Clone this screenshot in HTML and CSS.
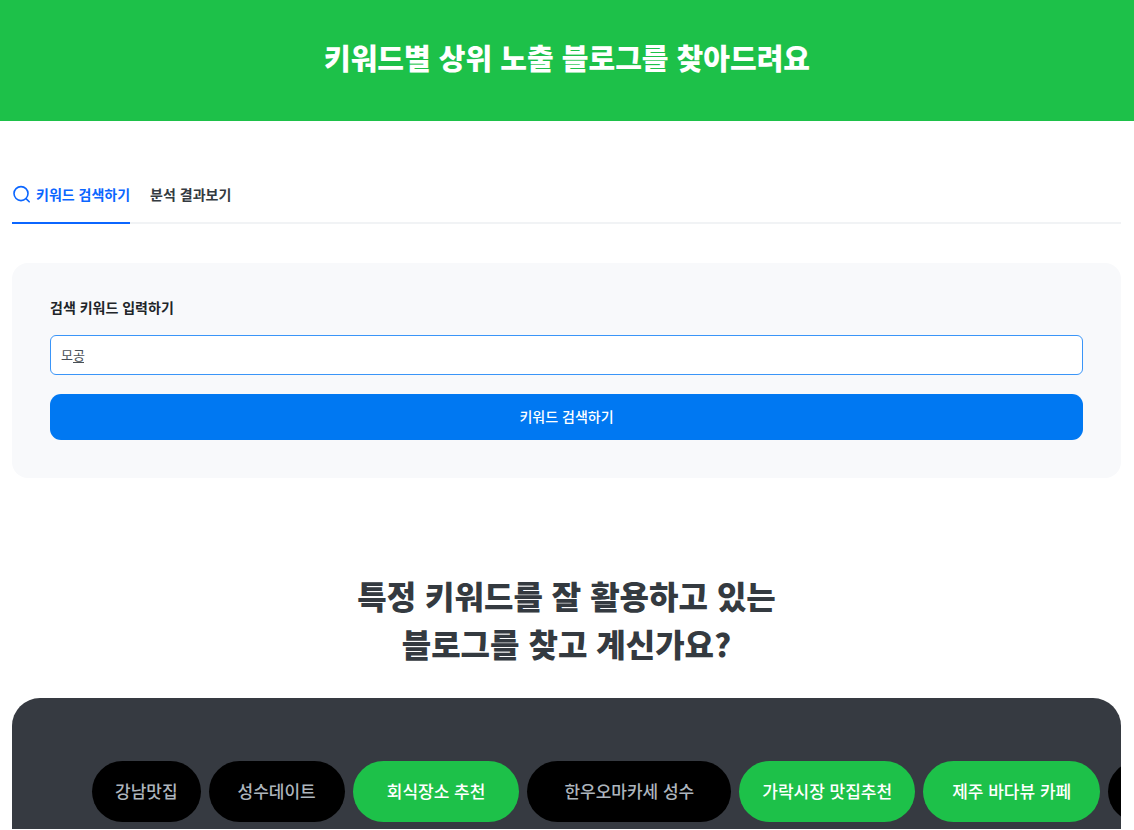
FILE: index.html
```html
<!DOCTYPE html>
<html lang="ko">
<head>
  <meta charset="UTF-8">
  <meta name="viewport" content="width=device-width, initial-scale=1.0">
  <title>키워드별 상위 노출 블로그</title>
  <link rel="stylesheet" href="styles.css">
</head>
<body>
  <header class="banner">
    <h1 class="banner-title">키워드별 상위 노출 블로그를 찾아드려요</h1>
  </header>

  <main class="container">
    <nav class="tabs">
      <a class="tab active" href="#search">
        <svg class="tab-icon" viewBox="0 0 20 20" fill="none" stroke="currentColor" stroke-width="1.6" stroke-linecap="round">
          <circle cx="9" cy="9.6" r="7"></circle>
          <path d="M14 14.6L17.2 17.8"></path>
        </svg>
        키워드 검색하기
      </a>
      <a class="tab" href="#result">분석 결과보기</a>
    </nav>

    <form class="search-box" id="search">
      <label class="search-label" for="keyword">검색 키워드 입력하기</label>
      <div class="search-field">
        <input class="search-input" type="text" id="keyword" value="모공">
        <!-- 입력 중인 글자 밑줄 -->
        <span class="composing"></span>
      </div>
      <button class="search-button" type="button">키워드 검색하기</button>
    </form>

    <h2 class="intro-title">특정 키워드를 잘 활용하고 있는<br>블로그를 찾고 계신가요?</h2>

    <section class="showcase">
      <div class="chips">
        <span class="chip chip-small">강남맛집</span>
        <span class="chip chip-medium">성수데이트</span>
        <span class="chip chip-large on">회식장소 추천</span>
        <span class="chip chip-wide">한우오마카세 성수</span>
        <span class="chip chip-small on">가락시장 맛집추천</span>
        <span class="chip chip-medium on">제주 바다뷰 카페</span>
        <span class="chip chip-wide"></span>
      </div>
    </section>
  </main>
</body>
</html>
```

FILE: styles.css
```css
* {
  box-sizing: border-box;
}

body {
  margin: 0;
  background-color: #fff;
  color: #343a40;
  font-family: "Noto Sans CJK KR", sans-serif;
}

.banner {
  padding: 35px 12px 42px;
  background-color: #1dc149;
  text-align: center;
}

.banner-title {
  margin: 0;
  color: #fff;
  font-size: 29px;
  font-weight: 900;
  line-height: 44px;
}

.container {
  margin: 0 13px 0 12px;
}

.tabs {
  display: flex;
  gap: 20px;
  margin-top: 46px;
  border-bottom: 2px solid #f1f3f5;
}

.tab {
  display: flex;
  align-items: center;
  gap: 4px;
  height: 57px;
  margin-bottom: -2px;
  padding-bottom: 2px;
  border-bottom: 2px solid transparent;
  color: #343a40;
  font-size: 14px;
  font-weight: 700;
  text-decoration: none;
}

.tab.active {
  border-bottom-color: #0b66ff;
  color: #0b66ff;
}

.tab-icon {
  width: 20px;
  height: 20px;
}

.search-box {
  margin-top: 39px;
  padding: 31px 38px 38px;
  border-radius: 16px;
  background-color: #f8f9fb;
}

.search-label {
  display: block;
  color: #212529;
  font-size: 14px;
  font-weight: 700;
  line-height: 26px;
}

.search-field {
  position: relative;
  margin-top: 15px;
}

.search-input {
  display: block;
  width: 100%;
  height: 40px;
  padding: 0 10px 2px;
  border: 1px solid #3a95f8;
  border-radius: 6px;
  background-color: #fff;
  color: #495057;
  font-family: inherit;
  font-size: 13px;
  outline: none;
}

.composing {
  position: absolute;
  left: 23px;
  bottom: 12px;
  width: 11px;
  height: 1px;
  background-color: #495057;
}

.search-button {
  display: block;
  width: 100%;
  height: 46px;
  margin-top: 19px;
  padding: 0 0 2px;
  border: none;
  border-radius: 11px;
  background-color: #0078f2;
  color: #fff;
  font-family: inherit;
  font-size: 14px;
  font-weight: 500;
  cursor: pointer;
}

.intro-title {
  margin: 93px 0 0;
  font-size: 32px;
  font-weight: 900;
  line-height: 48px;
  text-align: center;
}

.showcase {
  margin-top: 31px;
  padding: 63px 0 7px 80px;
  border-radius: 28px 28px 0 0;
  background-color: #363a41;
  overflow: hidden;
}

.chips {
  display: flex;
  gap: 8px;
}

.chip {
  flex: none;
  height: 61px;
  border-radius: 31px;
  background-color: #000;
  color: #adb5bd;
  font-size: 17px;
  font-weight: 500;
  line-height: 59px;
}

.chip-small {
  padding: 0 23px;
}

.chip-medium {
  padding: 0 29px;
}

.chip-large {
  padding: 0 34px;
}

.chip-wide {
  padding: 0 37px;
}

.chip.on {
  background-color: #1dc149;
  color: #fff;
}
```
